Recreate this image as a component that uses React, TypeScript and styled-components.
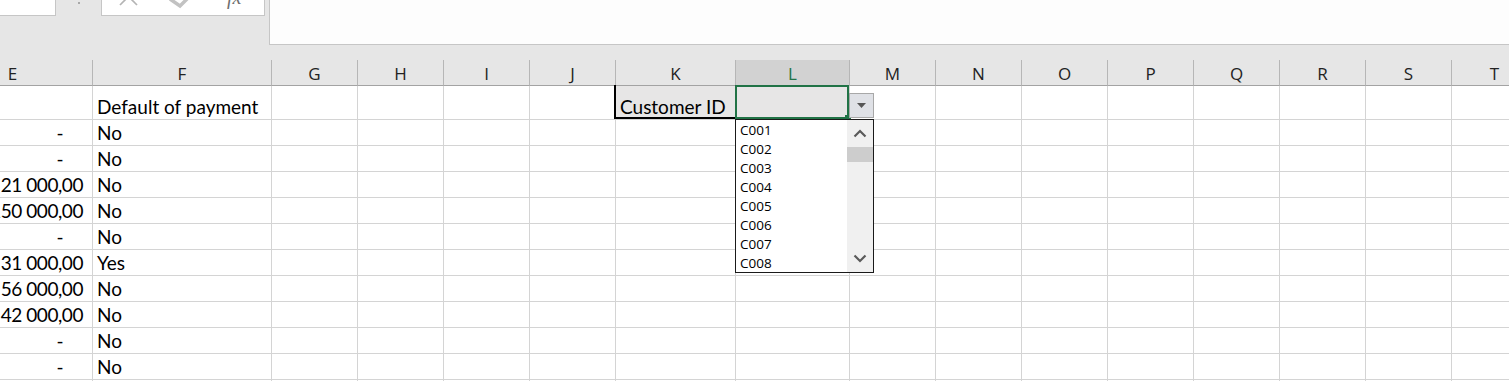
import React from "react";
import styled, { createGlobalStyle } from "styled-components";

const GlobalStyle = createGlobalStyle`
  html, body { margin: 0; padding: 0; background: #ffffff; overflow: hidden; }
  #root { width: 1509px; height: 381px; overflow: hidden; }
`;

const Page = styled.div`
  width: 1509px;
  height: 381px;
  overflow: hidden;
  background: #ffffff;
`;

/* ---------- top bar ---------- */
const Toolbar = styled.div`
  display: flex;
  align-items: flex-start;
  height: 60px;
  background: #e6e6e6;
`;

const NameBox = styled.div`
  box-sizing: border-box;
  width: 56px;
  height: 16px;
  background: #ffffff;
  border-right: 1px solid #c6c6c6;
  border-bottom: 1px solid #c6c6c6;
`;

const Grip = styled.div`
  width: 45px;
  height: 16px;
  display: flex;
  justify-content: center;
  & > i {
    display: block;
    width: 2px;
    height: 2px;
    margin: 2px 0 0 0;
    background: #a8a8a8;
  }
`;

const FxButtons = styled.div`
  box-sizing: border-box;
  width: 164px;
  height: 16px;
  background: #ffffff;
  border: 1px solid #c6c6c6;
  border-top: none;
  overflow: hidden;
  position: relative;
  display: flex;
  align-items: flex-start;
`;

const IconLayer = styled.svg`
  position: absolute;
  left: 0;
  top: 0;
  display: block;
`;

const FxLabel = styled.span`
  font-family: "Liberation Serif", serif;
  font-style: italic;
  font-size: 20px;
  line-height: 20px;
  color: #6f6f6f;
  margin-top: -13px;
  margin-left: 125px;
`;

const Gap = styled.div`
  width: 4px;
  flex: none;
`;

const FormulaBar = styled.div`
  box-sizing: border-box;
  flex: 1;
  height: 45px;
  background: #fdfdfd;
  border-left: 1px solid #c6c6c6;
  border-bottom: 1px solid #c6c6c6;
`;

/* ---------- sheet ---------- */
const widths = [160, 179, 86, 86, 86, 86, 120, 114, 86, 86, 86, 86, 86, 86, 86, 86];
const cols = ["E", "F", "G", "H", "I", "J", "K", "L", "M", "N", "O", "P", "Q", "R", "S", "T"];

const Sheet = styled.div`
  display: grid;
  grid-template-columns: ${widths.map((w) => `${w}px`).join(" ")};
  grid-template-rows: 26px 34px repeat(11, 26px);
  margin-left: -67px;
  width: max-content;
`;

const HeaderCell = styled.div<{ $selected?: boolean }>`
  box-sizing: border-box;
  display: flex;
  align-items: center;
  justify-content: center;
  background: ${(p) => (p.$selected ? "#d2d2d2" : "#e6e6e6")};
  color: ${(p) => (p.$selected ? "#217346" : "#222222")};
  border-right: 1px solid #b6b6b6;
  border-bottom: 1px solid #a3a3a3;
  font-family: "Open Sans", "Noto Sans", sans-serif;
  font-size: 17px;
  line-height: 20px;
  padding-top: 2px;
`;

const Cell = styled.div<{ $right?: boolean; $fill?: string; $pr?: number; $tight?: boolean }>`
  box-sizing: border-box;
  position: relative;
  display: flex;
  align-items: flex-end;
  justify-content: ${(p) => (p.$right ? "flex-end" : "flex-start")};
  background: ${(p) => p.$fill ?? "#ffffff"};
  border-right: 1px solid #d4d4d4;
  border-bottom: 1px solid #d4d4d4;
  padding: 0 ${(p) => p.$pr ?? 4}px 1px 4px;
  font-family: Lato, "Liberation Sans", sans-serif;
  font-size: 19px;
  line-height: 22px;
  letter-spacing: ${(p) => (p.$tight ? "-0.45px" : "0px")};
  color: #000000;
  white-space: nowrap;
`;

const CellText = styled.span`
  display: block;
`;

const ThickBorder = styled.div`
  position: absolute;
  left: -2px;
  top: -1px;
  right: 0;
  bottom: 0;
  border-left: 2px solid #000000;
  border-bottom: 2px solid #000000;
  pointer-events: none;
`;

const Selection = styled.div`
  position: absolute;
  box-sizing: border-box;
  left: -1px;
  top: -1px;
  width: 114px;
  height: 34px;
  border: 2px solid #217346;
  z-index: 2;
`;

const FillHandle = styled.div`
  position: absolute;
  left: 109px;
  top: 29px;
  width: 6px;
  height: 6px;
  background: #217346;
  z-index: 3;
`;

const DropButton = styled.div`
  position: absolute;
  box-sizing: border-box;
  left: 113px;
  top: 7px;
  width: 25px;
  height: 25px;
  background: #dfe1e6;
  border: 1px solid #a8a8a8;
  display: flex;
  align-items: center;
  justify-content: center;
  z-index: 3;
`;

const DropList = styled.div`
  position: absolute;
  box-sizing: border-box;
  left: -1px;
  top: 33px;
  width: 139px;
  height: 154px;
  background: #ffffff;
  border: 1px solid #1a1a1a;
  display: flex;
  z-index: 4;
`;

const Items = styled.div`
  flex: 1;
  display: flex;
  flex-direction: column;
  padding: 1px 0 0 4px;
`;

const Item = styled.div`
  font-family: "Open Sans", "Noto Sans", sans-serif;
  font-size: 13.5px;
  line-height: 19px;
  height: 19px;
  color: #000000;
`;

const ScrollBar = styled.div`
  width: 26px;
  background: #f0f0f0;
  display: flex;
  flex-direction: column;
  align-items: center;
`;

const ScrollArrow = styled.div`
  height: 27px;
  width: 100%;
  display: flex;
  align-items: center;
  justify-content: center;
`;

const Thumb = styled.div`
  width: 100%;
  height: 15px;
  background: #cdcdcd;
`;

const ScrollTrack = styled.div`
  flex: 1;
`;

const Chevron = ({ up }: { up?: boolean }) => (
  <svg width="14" height="9" viewBox="0 0 14 9">
    <polyline
      points={up ? "1.5,7.5 7,2 12.5,7.5" : "1.5,1.5 7,7 12.5,1.5"}
      fill="none"
      stroke="#5a5a5a"
      strokeWidth="2.2"
    />
  </svg>
);

type RowData = { e?: string; f?: string };
const rows: RowData[] = [
  { f: "Default of payment" },
  { e: "-", f: "No" },
  { e: "-", f: "No" },
  { e: "21 000,00", f: "No" },
  { e: "150 000,00", f: "No" },
  { e: "-", f: "No" },
  { e: "31 000,00", f: "Yes" },
  { e: "56 000,00", f: "No" },
  { e: "42 000,00", f: "No" },
  { e: "-", f: "No" },
  { e: "-", f: "No" },
  {},
];

const listItems = ["C001", "C002", "C003", "C004", "C005", "C006", "C007", "C008"];

export default function App() {
  return (
    <Page>
      <GlobalStyle />
      <Toolbar>
        <NameBox />
        <Grip>
          <i />
        </Grip>
        <FxButtons>
          <IconLayer width="162" height="15" viewBox="0 0 162 15">
            <g stroke="#b4b4b4" strokeWidth="1.7" fill="none">
              <line x1="18" y1="5" x2="35" y2="-12" />
              <line x1="35" y1="5" x2="18" y2="-12" />
            </g>
            <polyline points="68,-1 78,6 96,-12" fill="none" stroke="#c2c2c2" strokeWidth="3.5" />
          </IconLayer>
          <FxLabel>fx</FxLabel>
        </FxButtons>
        <Gap />
        <FormulaBar />
      </Toolbar>
      <Sheet>
        {cols.map((c) => (
          <HeaderCell key={c} $selected={c === "L"}>
            {c}
          </HeaderCell>
        ))}
        {rows.map((r, ri) =>
          cols.map((c) => {
            const key = `${c}${ri}`;
            if (c === "E") {
              const dash = r.e === "-";
              return (
                <Cell key={key} $right $tight $pr={dash ? 29 : 9}>
                  {r.e && <CellText>{r.e}</CellText>}
                </Cell>
              );
            }
            if (c === "F") {
              return <Cell key={key}>{r.f && <CellText>{r.f}</CellText>}</Cell>;
            }
            if (ri === 0 && c === "K") {
              return (
                <Cell key={key} $fill="#e7e6e6">
                  <CellText>Customer ID</CellText>
                  <ThickBorder />
                </Cell>
              );
            }
            if (ri === 0 && c === "L") {
              return (
                <Cell key={key} $fill="#e7e6e6">
                  <Selection />
                  <FillHandle />
                  <DropButton>
                    <svg width="9" height="5" viewBox="0 0 9 5">
                      <polygon points="0,0 9,0 4.5,5" fill="#555555" />
                    </svg>
                  </DropButton>
                  <DropList>
                    <Items>
                      {listItems.map((it) => (
                        <Item key={it}>{it}</Item>
                      ))}
                    </Items>
                    <ScrollBar>
                      <ScrollArrow>
                        <Chevron up />
                      </ScrollArrow>
                      <Thumb />
                      <ScrollTrack />
                      <ScrollArrow>
                        <Chevron />
                      </ScrollArrow>
                    </ScrollBar>
                  </DropList>
                </Cell>
              );
            }
            return <Cell key={key} />;
          })
        )}
      </Sheet>
    </Page>
  );
}
